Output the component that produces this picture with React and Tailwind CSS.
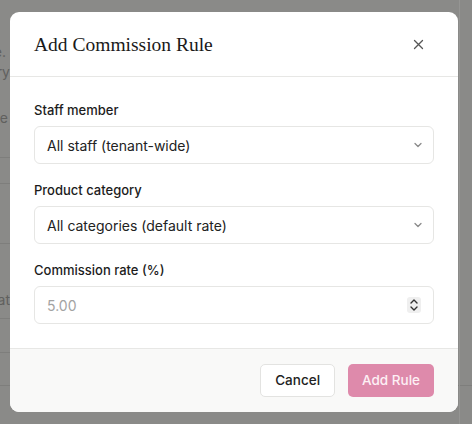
import React from 'react';

const sans = { fontFamily: 'Inter, "Noto Sans", sans-serif' };

function Chevron() {
	return (
		<svg width="10" height="10" viewBox="0 0 10 10" fill="none" stroke="#8a8a8a" strokeWidth="1.3" strokeLinecap="round" strokeLinejoin="round">
			<path d="M2 3.5 L5 6.5 L8 3.5" />
		</svg>
	)
}

function Spinner() {
	return (
		<div className="w-[14px] h-[16px] rounded-[3px] bg-[#efefef] flex items-center justify-center">
			<svg width="10" height="14" viewBox="0 0 10 14" fill="none" stroke="#333" strokeWidth="1.4" strokeLinecap="round" strokeLinejoin="round">
				<path d="M2 5 L5 2 L8 5" />
				<path d="M2 9 L5 12 L8 9" />
			</svg>
		</div>
	)
}

function Field({ label, children }) {
	return (
		<div className="flex flex-col gap-[6px]">
			<label className="text-[13px] leading-[20px] font-medium text-[#1c1c1c]">{label}</label>
			{children}
		</div>
	)
}

function SelectBox({ value }) {
	return (
		<div className="h-[38px] rounded-[6px] border border-[#e6e6e4] bg-white flex items-center justify-between pl-[12px] pr-[10px]">
			<span className="text-[14px] text-[#222]">{value}</span>
			<Chevron />
		</div>
	)
}

export default function App() {
	return (
		<div className="relative w-[472px] h-[424px] overflow-hidden bg-[#8a8a88]" style={sans}>

			{/* page behind the overlay */}
			<div className="absolute left-0 top-0 w-[60px] h-full text-[#60605e] text-[14px]">
				<div className="absolute right-[54px] top-[42px] leading-[20px]">e.</div>
				<div className="absolute right-[50px] top-[62px] leading-[20px]">ery</div>
				<div className="absolute right-[52px] top-[108px] leading-[20px]">te</div>
				<div className="absolute right-[50px] top-[290px] leading-[20px]">at</div>
			</div>
			<div className="absolute left-0 w-[20px] top-[157px] h-px bg-[#7e7e7c]" />
			<div className="absolute left-0 w-[20px] top-[183px] h-px bg-[#7e7e7c]" />
			<div className="absolute left-0 w-[20px] top-[243px] h-px bg-[#7e7e7c]" />
			<div className="absolute left-0 w-[20px] top-[318px] h-px bg-[#7e7e7c]" />
			<div className="absolute left-0 w-[20px] top-[352px] h-px bg-[#7e7e7c]" />
			<div className="absolute left-0 w-full top-[385px] h-px bg-[#7e7e7c]" />
			<div className="absolute left-[459px] top-0 w-px h-full bg-[#959593]" />

			{/* modal */}
			<div className="absolute left-[10px] top-[12px] w-[448px] h-[400px] bg-white rounded-[9px] overflow-hidden flex flex-col">
				<div className="h-[65px] shrink-0 border-b border-[#e7e7e5] flex items-center justify-between pl-[24px] pr-[34px]">
					<h2 className="text-[19.5px] text-[#1a1a1a] pt-[2px]" style={{ fontFamily: '"Liberation Serif", serif' }}>Add Commission Rule</h2>
					<svg width="11" height="11" viewBox="0 0 11 11" fill="none" stroke="#555" strokeWidth="1.3" strokeLinecap="round">
						<path d="M1.5 1.5 L9.5 9.5 M9.5 1.5 L1.5 9.5" />
					</svg>
				</div>

				<div className="flex flex-col gap-[16px] px-[24px] pt-[23px] pb-[24px]">
					<Field label="Staff member">
						<SelectBox value="All staff (tenant-wide)" />
					</Field>
					<Field label="Product category">
						<SelectBox value="All categories (default rate)" />
					</Field>
					<Field label="Commission rate (%)">
						<div className="h-[38px] rounded-[6px] border border-[#e6e6e4] bg-white flex items-center justify-between pl-[12px] pr-[12px]">
							<span className="text-[14px] text-[#a3a3a3]">5.00</span>
							<Spinner />
						</div>
					</Field>
				</div>

				<div className="flex-1 bg-[#f9f9f8] border-t border-[#e7e7e5] flex items-center justify-end gap-[13px] px-[24px]">
					<button className="h-[33px] px-[14px] rounded-[5px] border border-[#e3e3e1] bg-white text-[13.5px] font-medium text-[#222]">Cancel</button>
					<button className="h-[33px] px-[14px] rounded-[5px] bg-[#de8aab] text-[13.5px] font-medium text-[#fdf0f5]">Add Rule</button>
				</div>
			</div>
		</div>
	)
}
